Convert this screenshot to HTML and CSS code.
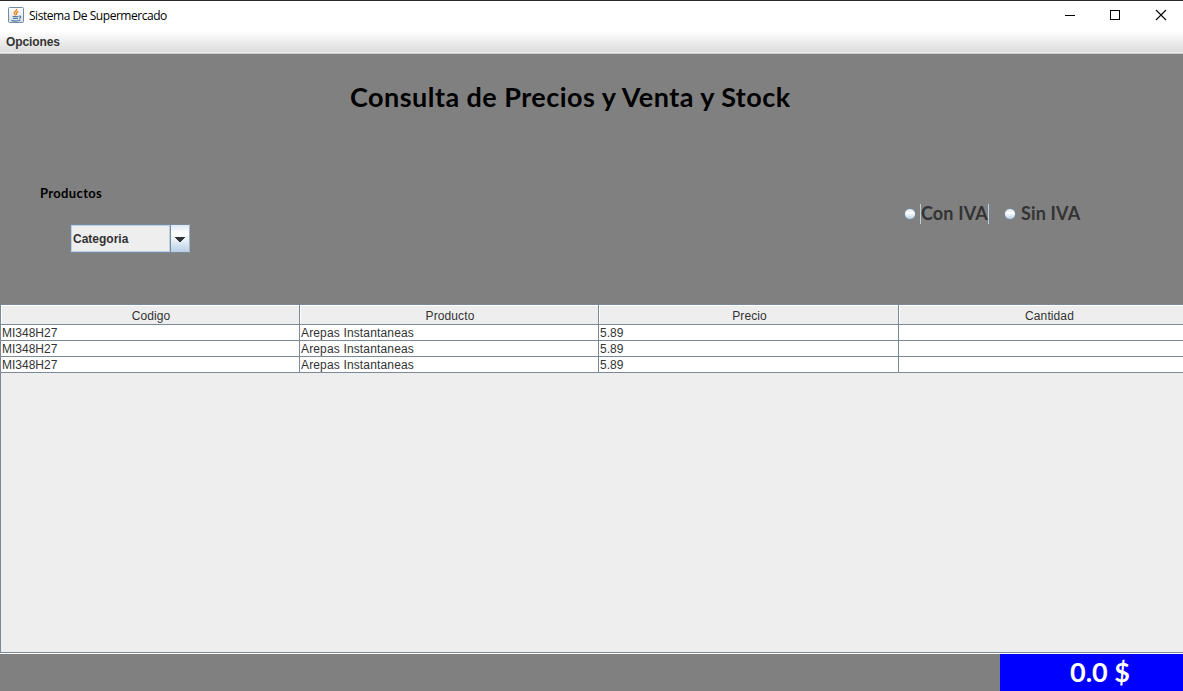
FILE: index.html
```
<!DOCTYPE html>
<html lang="es">
<head>
<meta charset="utf-8">
<title>Sistema De Supermercado</title>
<link rel="stylesheet" href="styles.css">
</head>
<body>
<div class="window">
  <header class="titlebar">
    <svg class="app-icon" width="16" height="16" viewBox="0 0 16 16">
      <defs><linearGradient id="tile" x1="0" y1="0" x2="0" y2="1"><stop offset="0" stop-color="#fff"/><stop offset="1" stop-color="#d5dee6"/></linearGradient></defs>
      <rect x=".5" y=".5" width="15" height="15" rx="1" fill="url(#tile)" stroke="#6f8ca3"/>
      <path d="M8.700 2C9.600 4 5.300 4.500 6.300 6.500L7.500 8.500M10.300 4.500C8 5.500 7.900 6.300 8.900 8" fill="none" stroke="#ef8220" stroke-width="1.400"/>
      <path d="M4.500 9.500H10.500M5 11.400H10M3.500 13.400C6 14.200 10 14.200 12.500 13M11 9C13.500 8.800 13 11 11 11.300" fill="none" stroke="#5079a0" stroke-width="1.200"/>
    </svg>
    <span class="app-title">Sistema De Supermercado</span>
    <svg class="controls" width="103" height="12" viewBox="0 0 103 12" shape-rendering="crispEdges">
      <path d="M0 6.500H10" stroke="#000"/>
      <rect x="45.500" y="1.500" width="9" height="9" fill="none" stroke="#000"/>
      <path d="M91 1L101 11M101 1L91 11" stroke="#000" stroke-width="1.100" shape-rendering="auto"/>
    </svg>
  </header>
  <nav class="menubar"><span>Opciones</span></nav>
  <section class="search">
    <h1 class="heading">Consulta de Precios y Venta y Stock</h1>
    <div class="filters">
      <div class="products">
        <div class="products-label">Productos</div>
        <div class="combo">
          <span class="combo-value">Categoria</span>
          <span class="combo-button"><svg width="10" height="5" viewBox="0 0 10 5" shape-rendering="crispEdges"><path d="M0 0H10V1H9V2H8V3H7V4H6V5H4V4H3V3H2V2H1V1H0Z" fill="#333"/></svg></span>
        </div>
      </div>
      <div class="radios">
        <span class="radio"></span><span class="radio-label focused">Con IVA</span>
        <span class="radio second"></span><span class="radio-label">Sin IVA</span>
      </div>
    </div>
  </section>
  <main class="scroll-pane">
    <div class="row head"><div>Codigo</div><div>Producto</div><div>Precio</div><div>Cantidad</div></div>
    <div class="row"><div>MI348H27</div><div class="name">Arepas Instantaneas</div><div>5.89</div><div></div></div>
    <div class="row"><div>MI348H27</div><div class="name">Arepas Instantaneas</div><div>5.89</div><div></div></div>
    <div class="row"><div>MI348H27</div><div class="name">Arepas Instantaneas</div><div>5.89</div><div></div></div>
  </main>
  <footer class="footer"><div class="total">0.0 $</div></footer>
</div>
</body>
</html>
```
FILE: styles.css
```
* { box-sizing: border-box; }
body { margin: 0; overflow: hidden; }
.window {
  width: 1183px; height: 691px;
  display: flex; flex-direction: column;
  background: #808080; color: #333;
  font: 12px "Liberation Sans", Arial, sans-serif;
}
.titlebar {
  height: 31px; flex: none;
  display: flex; align-items: center;
  padding: 0 15px 2px 8px;
  border-top: 1px solid #2b2930;
  background: #fff; color: #000;
}
.app-title {
  margin-left: 5px;
  font: 12px "Open Sans", "Noto Sans", sans-serif;
  letter-spacing: -0.46px;
}
.controls { margin-left: auto; }
.menubar {
  height: 23px; flex: none;
  padding: 0 6px;
  line-height: 22px; font-weight: bold;
  letter-spacing: -0.1px;
  background: linear-gradient(#fff, #dadada);
  border-bottom: 1px solid #ccc;
  box-shadow: inset 0 -1px #eee;
}
.search { height: 250px; flex: none; }
.heading {
  margin: 0; padding: 25px 0 1px 350px;
  font: bold 27px/36px Lato, sans-serif;
  letter-spacing: 0.46px;
  color: #000; white-space: nowrap;
}
.filters {
  display: flex; justify-content: space-between;
  padding: 67px 102px 0 40px;
}
.products-label {
  font: bold 13px/20px Lato, sans-serif;
  letter-spacing: 0.35px;
  color: #000;
}
.combo {
  display: flex;
  width: 120px; height: 29px;
  margin: 21px 0 0 30px;
  border: 1px solid #7a8a99; border-right-color: #9fb4c8;
  background: #eee;
}
.combo-value {
  width: 99px; padding-left: 1px;
  border: 1px solid #b8cfe5;
  line-height: 27px; font-weight: bold;
}
.combo-button {
  flex: 1;
  display: flex; align-items: center; justify-content: center;
  padding-top: 2px;
  border-left: 1px solid #7a8a99;
  background: linear-gradient(#dde8f3, #fff 30%, #fff 35%, #b8cfe5);
}
.radios { display: flex; align-items: center; height: 20px; margin-top: 21px; }
.radio {
  width: 12px; height: 12px; margin: 0 4px 0 0;
  border: 1px solid #7a8a99; border-radius: 50%;
  background: linear-gradient(#dde8f3, #fff 40%, #b8cfe5);
}
.radio.second { margin-left: 15px; }
.radio-label {
  width: 61px; padding-left: 1px;
  font: bold 18px/18px Lato, sans-serif;
  letter-spacing: 0.15px; white-space: nowrap;
  padding-bottom: 2px;
}
.focused { width: 69px; padding-left: 0; border: solid #b8cfe5; border-width: 0 1px; }
.scroll-pane {
  height: 349px; flex: none;
  background: #eee;
  border: solid #7a8a99; border-width: 1px 0 1px 1px;
}
.row {
  display: grid;
  grid-template: 16px / 299px 299px 300px 300px;
  background: #fff;
}
.row > div {
  padding-left: 1px;
  line-height: 17px;
  border: solid #7a8a99; border-width: 0 1px 1px 0;
}
.row > .name { letter-spacing: 0.15px; }
.row.head { grid-template-rows: 20px; }
.head > div {
  padding: 0 0 0 2px;
  line-height: 22px; text-align: center;
  letter-spacing: 0.1px;
  background: #eee;
  box-shadow: inset 1px 1px #fff;
}
.footer {
  flex: 1;
  display: flex; justify-content: flex-end;
  border-top: 1px solid #fff;
}
.total {
  width: 183px; padding-left: 70px;
  background: #00f; color: #fff;
  font: bold 27px/35px Lato, sans-serif;
}
```
